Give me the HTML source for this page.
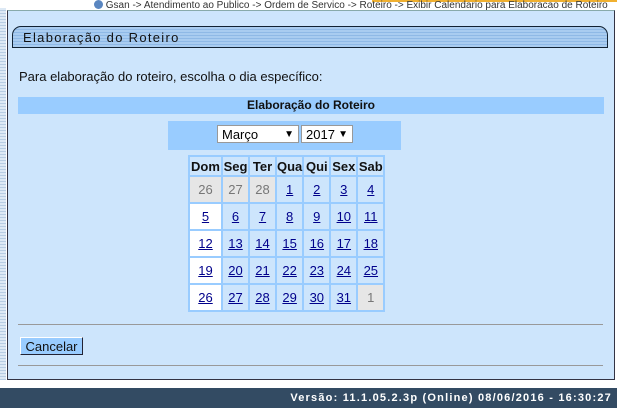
<!DOCTYPE html>
<html><head><meta charset="utf-8"><style>
body{margin:0;width:617px;height:408px;background:#fff;font-family:"Liberation Sans",Arial,sans-serif;position:relative;overflow:hidden}
.abs{position:absolute}
.strip{left:0;top:8px;width:6px;height:372px;background:repeating-linear-gradient(#dde9f5 0 2px,#b8cde3 2px 3px)}
.crumb{left:94px;top:0;font-size:10px;color:#333;white-space:nowrap;line-height:10px}
.panel{left:7px;top:10px;width:606px;height:368px;background:#cde5fc;border:1px solid #334;border-top:1px solid #8aa}
.title{left:12px;top:26px;width:596px;height:22px;border:1px solid #123;border-radius:9px 9px 0 0;background:repeating-linear-gradient(#a9ccf0 0 2px,#8fb9e6 2px 3px);font-size:13px;letter-spacing:1.3px;color:#111;line-height:22px;padding-left:10px;box-sizing:border-box}
.txt{left:19px;top:69px;font-size:13px;color:#111}
.bar{left:18px;top:97px;width:586px;height:17px;background:#99ccff;font-size:12px;font-weight:bold;text-align:center;line-height:17px;color:#111}
.selbar{left:168px;top:121px;width:233px;height:29px;background:#99ccff}
.sel{background:#fff;border:1px solid #999;font-size:13px;height:18px;line-height:18px;top:125px;padding-left:4px;box-sizing:border-box}
table{position:absolute;left:188px;top:155px;border-collapse:separate;border-spacing:2px;background:#99ccff;font-size:13px}
td{height:25px;text-align:center;background:#cde5fc;padding:0}
th{height:18px;font-weight:bold;color:#111;background:#cde5fc;font-size:13px;padding:0}
td a{color:#00008b;text-decoration:underline}
td.o{background:#e6e6e6;color:#777}
td.s{background:#fff}
.hr{left:18px;width:585px;height:1px;background:#999}
.btn{left:20px;top:337px;width:63px;height:18px;background:#99ccff;border:1px solid #fff;border-right-color:#223;border-bottom-color:#223;font-size:13px;line-height:18px;text-align:center;box-sizing:border-box;color:#111}
.foot{left:0;top:388px;width:617px;height:20px;background:#334b63;color:#fff;font-weight:bold;font-size:11px;letter-spacing:1.2px;text-align:right;line-height:20px;padding-right:5px;box-sizing:border-box}
</style></head><body>
<div class="abs strip"></div>
<div class="abs" style="left:372px;top:0;width:245px;height:2px;background:#f0b030"></div>
<div class="abs crumb"><span style="display:inline-block;width:9px;height:9px;border-radius:50%;background:#5a86c0;vertical-align:-1px"></span> Gsan -&gt; Atendimento ao Publico -&gt; Ordem de Servico -&gt; Roteiro -&gt; Exibir Calendario para Elaboracao de Roteiro</div>
<div class="abs panel"></div>
<div class="abs title">Elaboração do Roteiro</div>
<div class="abs txt">Para elaboração do roteiro, escolha o dia específico:</div>
<div class="abs bar">Elaboração do Roteiro</div>
<div class="abs selbar"></div>
<div class="abs sel" style="left:217px;width:82px">Março<span style="position:absolute;right:4px;font-size:10px">▼</span></div>
<div class="abs sel" style="left:301px;width:52px">2017<span style="position:absolute;right:4px;font-size:10px">▼</span></div>
<table>
<tr><th style="width:31px">Dom</th><th style="width:25px">Seg</th><th style="width:25px">Ter</th><th style="width:25px">Qua</th><th style="width:25px">Qui</th><th style="width:25px">Sex</th><th style="width:25px">Sab</th></tr>
<tr><td class="o">26</td><td class="o">27</td><td class="o">28</td><td><a>1</a></td><td><a>2</a></td><td><a>3</a></td><td><a>4</a></td></tr>
<tr><td class="s"><a>5</a></td><td><a>6</a></td><td><a>7</a></td><td><a>8</a></td><td><a>9</a></td><td><a>10</a></td><td><a>11</a></td></tr>
<tr><td class="s"><a>12</a></td><td><a>13</a></td><td><a>14</a></td><td><a>15</a></td><td><a>16</a></td><td><a>17</a></td><td><a>18</a></td></tr>
<tr><td class="s"><a>19</a></td><td><a>20</a></td><td><a>21</a></td><td><a>22</a></td><td><a>23</a></td><td><a>24</a></td><td><a>25</a></td></tr>
<tr><td class="s"><a>26</a></td><td><a>27</a></td><td><a>28</a></td><td><a>29</a></td><td><a>30</a></td><td><a>31</a></td><td class="o">1</td></tr>
</table>
<div class="abs hr" style="top:324px"></div>
<div class="abs btn">Cancelar</div>
<div class="abs hr" style="top:365px"></div>
<div class="abs foot">Versão: 11.1.05.2.3p (Online) 08/06/2016 - 16:30:27</div>
</body></html>
